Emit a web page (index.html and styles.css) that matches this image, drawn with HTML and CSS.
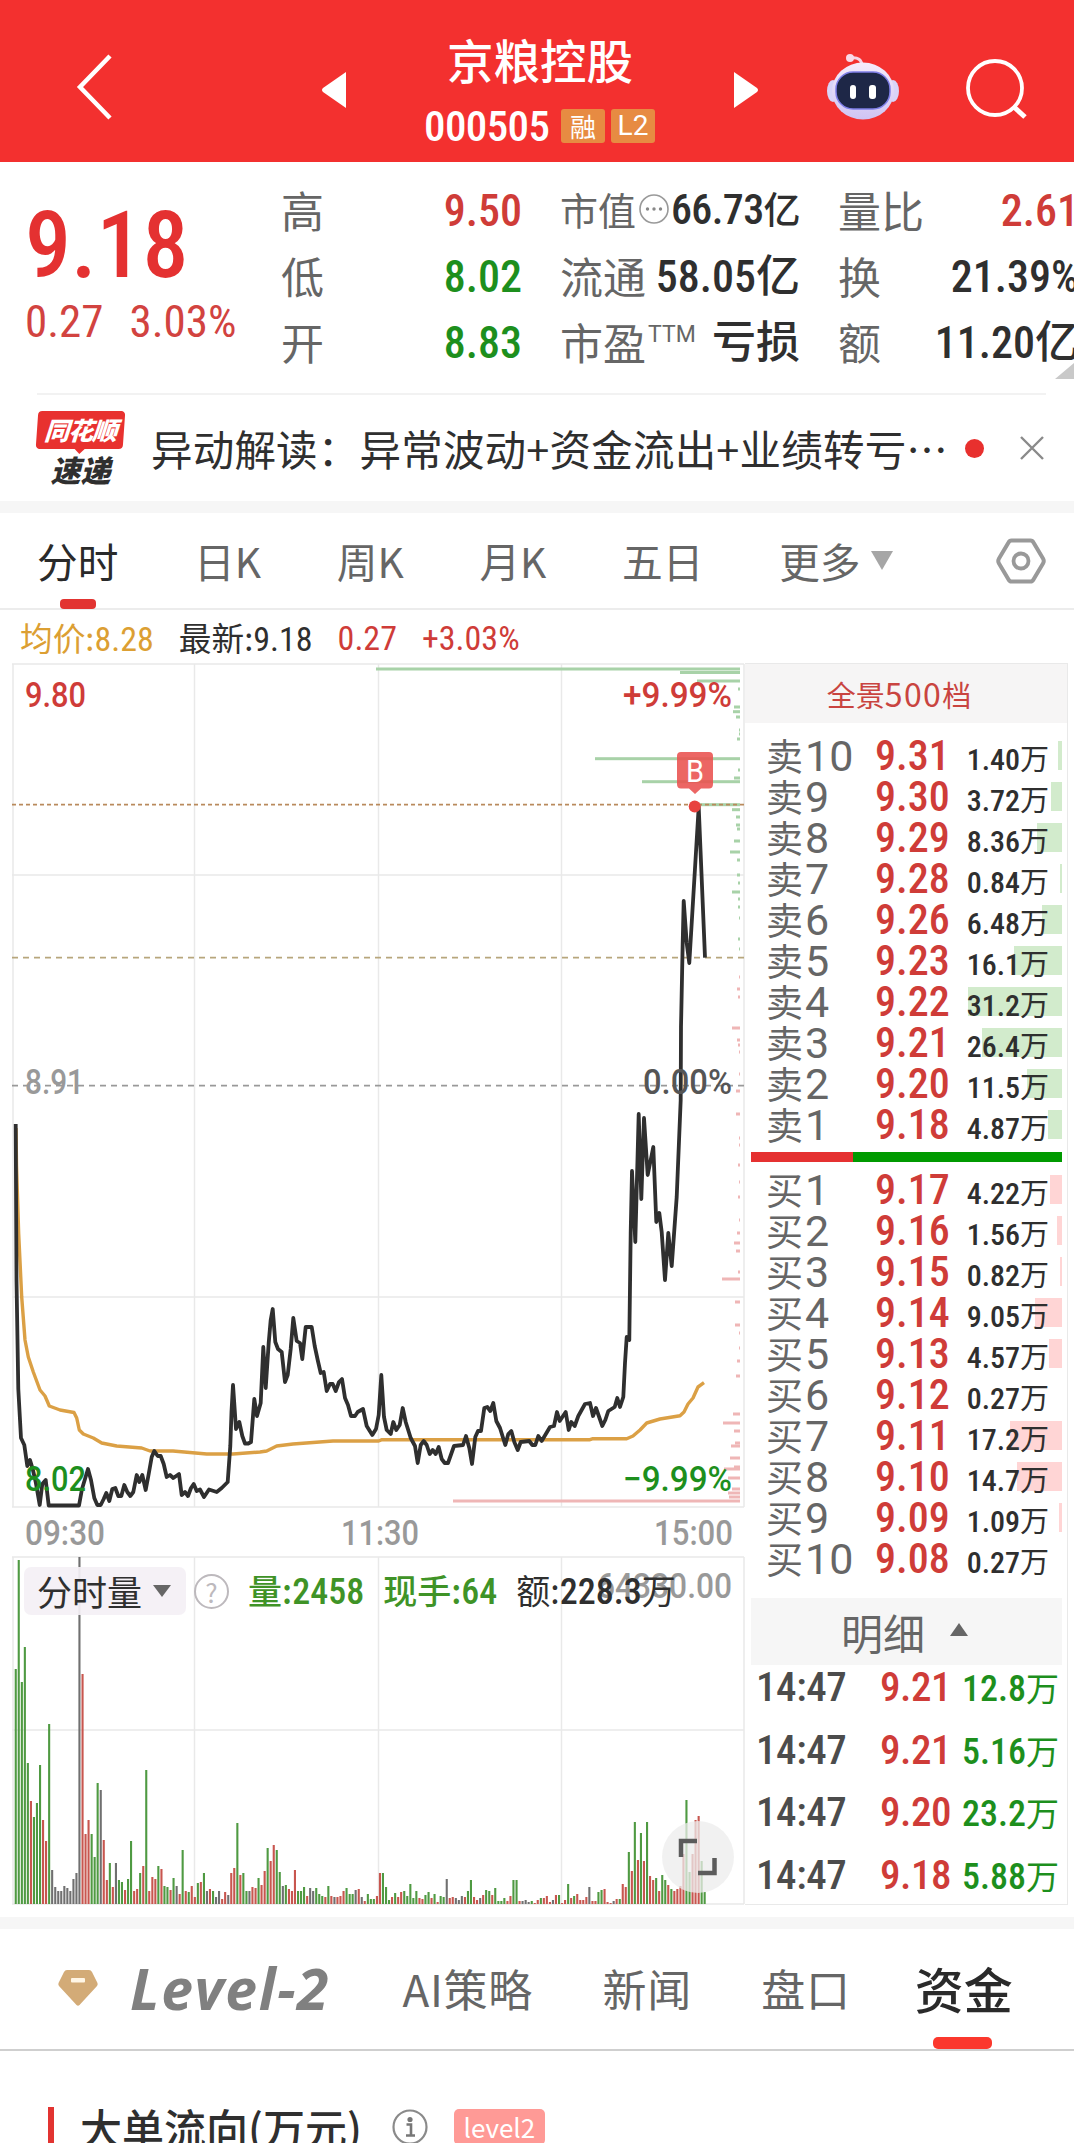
FILE: index.html
```html
<!DOCTYPE html>
<html lang="zh-CN">
<head>
    <meta charset="UTF-8">
    <meta name="viewport" content="width=device-width, initial-scale=1.0">
    <title>京粮控股 000505</title>
    <link rel="stylesheet" href="styles.css">
</head>
<body>

    <header class="topbar">
        <svg class="back" width="36" height="68" viewBox="0 0 36 68"><path d="M34 3 L4 34 L34 65" fill="none" stroke="#fff" stroke-width="4.5"/></svg>
        <svg class="prev" width="24" height="36" viewBox="0 0 24 36"><path d="M24 0 V36 L1 20 Q-1 18 1 16 Z" fill="#fff"/></svg>
        <div class="stock">
            <h1>京粮控股</h1>
            <div class="code-row">
                <span class="code num">000505</span>
                <span class="tag">融</span>
                <span class="tag num">L2</span>
            </div>
        </div>
        <svg class="next" width="24" height="36" viewBox="0 0 24 36"><path d="M0 0 V36 L23 20 Q25 18 23 16 Z" fill="#fff"/></svg>
        <svg class="robot" width="74" height="70" viewBox="0 0 74 70">
            <defs>
                <linearGradient id="shell" x1="0" y1="0" x2="0" y2="1">
                    <stop offset="0" stop-color="#f6ecfb"/>
                    <stop offset="1" stop-color="#cfc4f3"/>
                </linearGradient>
            </defs>
            <path d="M25 6 Q37 4 37 15" fill="none" stroke="#f6d3e4" stroke-width="3"/>
            <circle cx="25" cy="6" r="4" fill="#f9d9e8"/>
            <ellipse cx="8" cy="39" rx="6" ry="11" fill="#d9d4f8"/>
            <ellipse cx="68" cy="39" rx="6" ry="11" fill="#d9d4f8"/>
            <ellipse cx="38" cy="39" rx="31" ry="28.5" fill="url(#shell)"/>
            <rect x="11" y="20" width="54" height="37" rx="17" fill="#1e2747" stroke="#7f7fe8" stroke-width="1.5"/>
            <rect x="25" y="33" width="6" height="14" rx="3" fill="#fff"/>
            <rect x="44" y="33" width="7" height="14" rx="3" fill="#fff"/>
        </svg>
        <svg class="search" width="64" height="64" viewBox="0 0 64 64">
            <circle cx="31" cy="30" r="27" fill="none" stroke="#fff" stroke-width="3.8"/>
            <path d="M50 49 L61 59" stroke="#fff" stroke-width="5"/>
        </svg>
    </header>

    <section class="quote">
        <div class="price">
            <div class="last num">9.18</div>
            <div class="change"><span class="num">0.27</span><span class="num">3.03%</span></div>
        </div>
        <div class="stats">
            <div class="stat"><span class="label">高</span><span class="num red">9.50</span></div>
            <div class="stat"><span class="label">低</span><span class="num green">8.02</span></div>
            <div class="stat"><span class="label">开</span><span class="num green">8.83</span></div>
        </div>
        <div class="stats cap">
            <div class="stat">
                <span class="label small">市值<svg width="34" height="32" viewBox="0 0 34 32"><circle cx="18" cy="16" r="14" fill="none" stroke="#999" stroke-width="1.6"/><circle cx="11.5" cy="16" r="1.7" fill="#888"/><circle cx="18" cy="16" r="1.7" fill="#888"/><circle cx="24.5" cy="16" r="1.7" fill="#888"/></svg></span>
                <span class="num tight">66.73<span>亿</span></span>
            </div>
            <div class="stat"><span class="label">流通</span><span class="num">58.05亿</span></div>
            <div class="stat"><span class="label">市盈<sup>TTM</sup></span><span class="num">亏损</span></div>
        </div>
        <div class="stats last-col">
            <div class="stat"><span class="label">量比</span><span class="num red">2.61</span></div>
            <div class="stat"><span class="label">换</span><span class="num">21.39%</span></div>
            <div class="stat"><span class="label">额</span><span class="num">11.20亿</span></div>
        </div>
        <i class="corner"></i>
    </section>

    <section class="news">
        <div class="news-logo">
            <b class="logo-top">同花顺</b>
            <b class="logo-bottom">速递</b>
        </div>
        <p>异动解读：异常波动+资金流出+业绩转亏⋯</p>
        <i class="dot"></i>
        <svg width="26" height="26" viewBox="0 0 26 26"><path d="M2 2 L24 24 M24 2 L2 24" stroke="#8a8a8a" stroke-width="2.4"/></svg>
    </section>

    <nav class="periods">
        <span class="active">分时</span>
        <span>日K</span>
        <span>周K</span>
        <span>月K</span>
        <span>五日</span>
        <span class="more">更多<i class="down"></i></span>
        <svg width="50" height="46" viewBox="0 0 50 46">
            <path d="M15.5 2.5 H34.5 Q36.5 2.5 37.5 4.5 L47 20.5 Q48.5 23 47 25.5 L37.5 41.5 Q36.5 43.5 34.5 43.5 H15.5 Q13.5 43.5 12.5 41.5 L3 25.5 Q1.5 23 3 20.5 L12.5 4.5 Q13.5 2.5 15.5 2.5 Z" fill="none" stroke="#999" stroke-width="4"/>
            <circle cx="25" cy="23" r="7.5" fill="none" stroke="#999" stroke-width="3.8"/>
        </svg>
    </nav>

    <div class="summary">
        <span class="avg">均价:<span class="num">8.28</span></span>
        <span>最新:<span class="num">9.18</span></span>
        <span class="num red">0.27</span>
        <span class="num red">+3.03%</span>
    </div>

    <main class="trade">
        <div class="charts">
            <svg class="price-chart" width="745" height="893" viewBox="0 663 745 893">
                <g class="grid">
                    <path d="M12 664 H744 M12 875 H744 M12 1297 H744 M12 1507 H744"/>
                    <path d="M13 664 V1507 M194.5 664 V1507 M378.5 664 V1507 M561.5 664 V1507 M744 664 V1507"/>
                </g>
                <g id="depth"></g>
                <path d="M12 804.7 H745" stroke="#b98a5c" stroke-width="1.8" stroke-dasharray="4 3"/>
                <path d="M12 957.7 H745" stroke="#b7a67c" stroke-width="1.8" stroke-dasharray="6 5"/>
                <path d="M12 1085.7 H745" stroke="#999" stroke-width="1.8" stroke-dasharray="6 5"/>
                <path class="avg-line" d="M16 1128 L16.5 1165 L18.7 1234 L21.7 1297 L25 1340 L28.3 1357 L33.3 1372 L40 1390 L45 1396 L49.3 1406 L60 1410 L74 1412.5 L76.7 1418 L79.3 1430 L83.3 1434 L93.3 1438 L101.7 1443 L116.7 1446 L141.7 1448 L150 1451 L173 1451 L206.7 1454 L233 1454 L260 1452 L266.7 1451 L276.7 1446 L293 1444 L333 1441 L378.7 1441 L382 1439.7 L590 1439.7 L593 1438.7 L626.7 1438.7 L633 1436 L640 1430 L646.7 1423 L660 1419 L680 1415.7 L684 1412 L688 1404 L693 1398 L698 1387 L704 1382.7"/>
                <path class="price-line" d="M15.7 1124 L16.5 1280 L18.3 1389 L21 1438 L24.3 1445 L27.3 1466 L30 1460 L32.7 1469 L35.7 1482 L39.7 1505 L42.3 1484 L45.7 1480 L48.7 1505.5 H79 L82 1489 L85.3 1478 L88 1469 L91 1480 L94.3 1498 L97.3 1505 H100.7 L103.7 1499 L106.3 1493 L109.3 1501 L112.3 1489 L115.3 1488 L118.3 1496 H121.3 L124.3 1485 L127.3 1492 L130.3 1496 L133.3 1492 L136.7 1475 L139.3 1482 L142.3 1475 L145.7 1490 L148.7 1474 L151.7 1457 L154.3 1451 L157.7 1456 H160.7 L163.7 1464 L166.7 1477 L170 1475 L173.3 1478 L179 1474 L181.7 1495 L185 1492 L188 1496 L191 1488 L193.7 1484 L196.7 1491 L200 1489.5 L204 1497 L209 1489.5 L216.7 1492 L221.7 1488 L227.7 1482 L230.3 1446 L231.5 1412 L233 1385 L236 1429 L239.3 1422 L242.3 1436 L245 1443.5 H248.3 L251 1442 L254.3 1399 L257 1416 L260.7 1403 L263.3 1347 L265.7 1388 L268.7 1343 L270.7 1320 L272.7 1309 L275.3 1342 L278 1349 L281.7 1352 L285 1382 L287.7 1375 L290.7 1349 L293.3 1318 L296.7 1341 L300 1343 L302.3 1359 L305.7 1327 H311.7 L314.7 1346 L317.7 1360 L320.7 1373 L323.7 1372 L326.7 1391 L330 1384 H332.7 L335.7 1391 L339 1382 L342 1379 L345 1398 L348 1405 L351 1416 H355 L357.7 1412 L363 1409 L366.7 1426 L372.3 1435 L376 1429 L378.7 1415 L381.3 1375 L384 1417 L386.7 1430 L390.7 1434 L393.3 1422 L396.3 1430 L399.7 1425 L402.7 1408 L405.7 1422 L410.7 1438 L415 1446 L417.7 1463 L420.7 1445 L423.7 1441 L426.7 1445 L429.7 1454 L432.7 1450 L435.7 1454 L438.7 1447 L441.7 1459 L444.7 1463 H448 L454 1446 L463 1445 L466 1436 L469.3 1448 L472 1464 L475.3 1437 L478 1431 H481 L484.3 1408 L487.3 1407 L490.3 1411 L493.3 1403 L496.3 1421 L500 1428 L505.3 1445 L508.3 1434 L511.3 1431 L514.3 1442 L517.7 1450 L520.7 1442 L529.3 1441 L532.3 1445 H535.3 L538.3 1436 L541.7 1441 L550 1427 L554 1426 L557 1412 L559.7 1421 L565.7 1412 L568.7 1430 L571.3 1422 L574.7 1426 L578.3 1416 L585 1404 L590 1403 L593 1416 L596 1408 L602.3 1426 L605.3 1420 L608.3 1411 L614.7 1407 L617.3 1398 L620 1407 L623.3 1397 L625 1363 L626.7 1337 L629.3 1340 L630.7 1233 L632 1171 L635.3 1242 L638.7 1114 L641.3 1199 L644 1118 L647.7 1175 L653.3 1147 L656.3 1222 L659.3 1213 L661.7 1232 L665 1280 L668.3 1233 L671.7 1266 L676.7 1197 L680.7 1100 L681 1027 L682.7 943 L683.7 901 L686.7 943 L689.3 963 L698.7 807 L705 957.7"/>
                <!-- buy marker -->
                <circle cx="694.7" cy="806.5" r="6" fill="#e8423f"/>
                <path d="M681 752 H709 Q713 752 713 756 V784 Q713 788.5 709 788.5 H701 L695 794 L689 788.5 H681 Q677 788.5 677 784 V756 Q677 752 681 752 Z" fill="#e9514f" fill-opacity=".88"/>
                <text class="marker" x="686" y="782" textLength="18" lengthAdjust="spacingAndGlyphs">B</text>
                <text class="red" x="25" y="706.5" textLength="61" lengthAdjust="spacingAndGlyphs">9.80</text>
                <text class="grey" x="25" y="1094" textLength="59" lengthAdjust="spacingAndGlyphs">8.91</text>
                <text class="green" x="25" y="1490.5" textLength="61" lengthAdjust="spacingAndGlyphs">8.02</text>
                <text class="red" x="623" y="706.5" textLength="109" lengthAdjust="spacingAndGlyphs">+9.99%</text>
                <text class="dark" x="643" y="1094" textLength="89" lengthAdjust="spacingAndGlyphs">0.00%</text>
                <text class="green" x="623" y="1490.5" textLength="109" lengthAdjust="spacingAndGlyphs">−9.99%</text>
                <text class="grey" x="25" y="1545" textLength="80" lengthAdjust="spacingAndGlyphs">09:30</text>
                <text class="grey" x="341" y="1545" textLength="78" lengthAdjust="spacingAndGlyphs">11:30</text>
                <text class="grey" x="654" y="1545" textLength="79" lengthAdjust="spacingAndGlyphs">15:00</text>
            </svg>
            <div class="volume">
                <div class="volume-head">
                    <span class="chip">分时量<i class="down"></i></span>
                    <span class="help">?</span>
                    <span class="green2">量:<span class="num">2458</span></span>
                    <span class="green2">现手:<span class="num">64</span></span>
                    <span>额:<span class="num">228.3</span>万</span>
                </div>
                <svg width="745" height="349" viewBox="0 1556 745 349">
                    <g class="grid">
                        <path d="M12 1557 H744 M12 1730 H744 M12 1904 H744"/>
                        <path d="M13 1557 V1904 M194.5 1557 V1904 M378.5 1557 V1904 M561.5 1557 V1904 M744 1557 V1904"/>
                    </g>
                    <text class="grey" x="597" y="1598" textLength="135" lengthAdjust="spacingAndGlyphs">64330.00</text>
                    <g id="bars"></g>
                    <circle cx="698" cy="1857" r="36" fill="#ececec" fill-opacity=".75"/>
                    <path d="M681 1857 V1841 H697 M714.5 1858 V1873 H698" fill="none" stroke="#5c5c5c" stroke-width="4.5"/>
                </svg>
            </div>
        </div>

        <aside class="book">
            <div class="book-head">全景<span>500</span>档</div>
            <div class="levels" id="asks"></div>
            <div class="ratio"><i></i></div>
            <div class="levels" id="bids"></div>
            <div class="detail-head">明细<i class="up"></i></div>
            <div class="ticks">
                <div><span class="num">14:47</span><span class="num red">9.21</span><span class="green"><span class="num">12.8</span>万</span></div>
                <div><span class="num">14:47</span><span class="num red">9.21</span><span class="green"><span class="num">5.16</span>万</span></div>
                <div><span class="num">14:47</span><span class="num red">9.20</span><span class="green"><span class="num">23.2</span>万</span></div>
                <div><span class="num">14:47</span><span class="num red">9.18</span><span class="green"><span class="num">5.88</span>万</span></div>
            </div>
        </aside>
    </main>

    <nav class="tabs">
        <svg width="40" height="38" viewBox="0 0 40 38">
            <path d="M9 1 H31 Q33 1 34 3 L39.5 14 Q40 16 39 17 L21.5 36 Q20 37.5 18.5 36 L1 17 Q0 16 .5 14 L6 3 Q7 1 9 1 Z" fill="#d3ab77"/>
            <rect x="13" y="9" width="14" height="4.5" rx="1" fill="#fff6e6"/>
        </svg>
        <span class="level">Level-2</span>
        <span>AI策略</span>
        <span>新闻</span>
        <span>盘口</span>
        <span class="active">资金</span>
    </nav>

    <section class="flow">
        <i class="mark"></i>
        <h2>大单流向(万元)</h2>
        <svg width="36" height="36" viewBox="0 0 36 36">
            <circle cx="18" cy="18" r="16.5" fill="none" stroke="#8a8a8a" stroke-width="2.2"/>
            <circle cx="18" cy="10.5" r="2.6" fill="#777"/>
            <path d="M14.5 15.5 H19 V26 M14 26.5 H23" fill="none" stroke="#777" stroke-width="2.6"/>
        </svg>
        <span class="badge">level2</span>
    </section>

    <script src="script.js"></script>
</body>
</html>
```
FILE: styles.css
```css
* {
    box-sizing: border-box;
}
body {
    margin: 0;
    width: 1074px;
    height: 2143px;
    overflow: hidden;
    background-color: #fff;
    color: #2f2f2f;
    font-family: "Noto Sans CJK SC", sans-serif;
}
h1, h2, p {
    margin: 0;
    font-weight: normal;
}
i {
    display: block;
}
svg {
    display: block;
    flex: none;
}
.num {
    font-family: Roboto, "Noto Sans CJK SC", sans-serif;
    font-weight: 480;
    font-stretch: 84%;
}
.red {
    color: #cf3c38;
}
.green {
    color: #1d8f1d;
}
.green2 {
    color: #3f9327;
}

/* top bar */
.topbar {
    display: flex;
    height: 162px;
    background-color: #f3302f;
    color: #fff;
}
.back {
    margin: 53px 0 0 76px;
}
.prev {
    margin: 72px 0 0 210px;
}
.stock {
    width: 388px;
    padding-top: 28px;
    text-align: center;
}
.stock h1 {
    height: 65px;
    line-height: 62px;
    font-size: 46.5px;
    font-weight: 500;
}
.code-row {
    display: flex;
    align-items: center;
    height: 66px;
    padding-left: 78px;
    gap: 6px;
}
.code {
    width: 131px;
    font-size: 43px;
    letter-spacing: -0.6px;
    text-align: left;
}
.tag {
    width: 44px;
    height: 34px;
    border-radius: 3px;
    background-color: #e78b42;
    line-height: 34px;
    font-size: 26px;
}
.tag.num {
    font-size: 28px;
    font-weight: 400;
    font-stretch: 95%;
}
.next {
    margin-top: 72px;
}
.robot {
    margin: 52px 0 0 67px;
}
.search {
    margin: 58px 0 0 65px;
}

/* quote */
.quote {
    position: relative;
    display: flex;
    height: 231px;
    padding-top: 16px;
}
.price {
    flex: none;
    width: 281px;
    padding-left: 25px;
    color: #e43131;
}
.last {
    height: 110px;
    line-height: 136px;
    font-size: 92px;
    font-weight: 500;
    font-stretch: 80%;
}
.change {
    display: flex;
    gap: 26px;
    height: 66px;
    line-height: 67px;
    font-size: 45px;
    color: #d24340;
}
.change .num {
    font-weight: 450;
}
.stats {
    flex: none;
    width: 241px;
    margin-right: 38px;
}
.stats.cap {
    width: 240px;
    margin-right: 38px;
}
.stats.last-col {
    margin-right: 0;
}
.stat {
    display: flex;
    justify-content: space-between;
    align-items: center;
    height: 66px;
    font-size: 44px;
    line-height: 62px;
    white-space: nowrap;
}
.stat .tight {
    font-size: 42px;
    font-stretch: 75%;
    letter-spacing: -0.6px;
}
.stat .tight span {
    font-size: 37px;
}
.label {
    display: flex;
    align-items: center;
    padding-bottom: 4px;
    font-size: 43px;
    color: #666;
}
.label.small {
    font-size: 38px;
}
.label sup {
    align-self: flex-start;
    margin-left: 2px;
    font-family: Roboto, sans-serif;
    font-size: 23px;
    line-height: 50px;
}
.corner {
    position: absolute;
    left: 1055px;
    top: 201px;
    border-left: 19px solid transparent;
    border-bottom: 16px solid #c9c9c9;
}

/* news */
.news {
    display: flex;
    align-items: center;
    height: 108px;
    margin: 0 28px 0 37px;
    border-top: 2px solid #f2f2f2;
}
.news-logo {
    position: relative;
    flex: none;
    width: 87px;
    margin-right: 27px;
    font-style: italic;
    text-align: center;
}
.logo-top {
    display: block;
    height: 38px;
    border-radius: 4px;
    background-color: #e8312f;
    color: #fff;
    line-height: 37px;
    font-size: 25px;
    font-weight: 900;
    letter-spacing: -1px;
    transform: skewX(-4deg);
}
.logo-top::after {
    content: "";
    position: absolute;
    left: 38px;
    top: 37px;
    border: 6px solid transparent;
    border-top-color: #e8312f;
    border-bottom: 0;
}
.logo-bottom {
    display: block;
    height: 36px;
    line-height: 40px;
    font-size: 30px;
    font-weight: 900;
}
.news p {
    flex: none;
    width: 814px;
    font-size: 41.5px;
    letter-spacing: 0.2px;
    line-height: 60px;
    white-space: nowrap;
}
.dot {
    flex: none;
    width: 19px;
    height: 19px;
    margin-right: 35px;
    border-radius: 50%;
    background-color: #e8302e;
}

/* period tabs */
.periods {
    position: relative;
    display: flex;
    align-items: center;
    gap: 75.7px;
    height: 109px;
    padding: 0 28px 0 37px;
    border-top: 12px solid #f6f6f6;
    border-bottom: 2px solid #ececec;
    font-size: 40.7px;
    line-height: 60px;
    color: #666;
}
.periods span {
    white-space: nowrap;
}
.periods .active {
    color: #2a2a2a;
}
.periods .active::after {
    content: "";
    position: absolute;
    left: 60px;
    bottom: -1px;
    width: 36px;
    height: 10px;
    border-radius: 4px;
    background-color: #e23431;
}
.periods svg {
    margin-left: auto;
}
.more {
    display: flex;
    align-items: center;
}
.more .down {
    margin-left: 10px;
    border: 11px solid transparent;
    border-top: 19px solid #a6a6a6;
    border-bottom: 0;
}

/* summary */
.summary {
    display: flex;
    align-items: center;
    gap: 25px;
    height: 53px;
    padding: 2px 0 0 20px;
    font-size: 32.7px;
    line-height: 48px;
}
.summary .num {
    font-size: 34px;
    font-weight: 450;
    font-stretch: 80%;
}
.summary .avg {
    color: #dc9f33;
}

/* charts */
.trade {
    display: flex;
    height: 1242px;
}
.charts {
    width: 745px;
}
.charts text {
    font-family: Roboto, sans-serif;
    font-size: 35px;
    font-weight: 470;
    font-stretch: 90%;
    fill: currentColor;
}
.charts text.grey {
    color: #999;
}
.charts text.dark {
    color: #555;
}
.charts text.marker {
    color: #fff;
    font-size: 32px;
    font-weight: 400;
}
.grid path {
    fill: none;
    stroke: #e9e9e9;
    stroke-width: 1.5;
}
.price-line {
    fill: none;
    stroke: #2f2f2f;
    stroke-width: 3.8;
    stroke-linejoin: round;
}
.avg-line {
    fill: none;
    stroke: #dba045;
    stroke-width: 3.4;
    stroke-linejoin: round;
}
.volume {
    position: relative;
}
.volume-head {
    position: absolute;
    top: 11px;
    left: 24px;
    display: flex;
    align-items: center;
    gap: 19px;
    height: 48px;
    font-size: 34px;
    line-height: 48px;
    white-space: nowrap;
}
.volume-head .green2 {
    font-weight: 500;
}
.volume-head .num {
    font-size: 36px;
    font-weight: 490;
    font-stretch: 86%;
}
.chip {
    display: flex;
    align-items: center;
    width: 162px;
    height: 48px;
    padding-left: 13px;
    border-radius: 7px;
    background-color: rgba(244, 240, 245, 0.92);
    font-size: 35px;
}
.chip .down {
    margin-left: 11px;
    border: 9px solid transparent;
    border-top: 12px solid #666;
    border-bottom: 0;
}
.help {
    width: 35px;
    height: 35px;
    margin-left: -11px;
    border: 2px solid #bdb9bd;
    border-radius: 50%;
    color: #bdb9bd;
    line-height: 31px;
    font-size: 26px;
    text-align: center;
}

/* order book */
.book {
    width: 323px;
    border: 1px solid #e9e9e9;
    border-left: 0;
}
.book-head {
    height: 59px;
    background-color: #f6f5f5;
    color: #c94440;
    line-height: 58px;
    font-size: 29px;
    text-align: center;
    padding-right: 14px;
}
.book-head span {
    font-size: 32px;
    letter-spacing: 1.4px;
}
.levels {
    height: 410px;
}
#asks {
    margin-top: 12px;
}
.row {
    position: relative;
    display: flex;
    height: 41px;
    line-height: 41px;
    padding-left: 21px;
    white-space: nowrap;
}
.row .name {
    width: 109px;
    font-size: 37px;
    color: #666;
}
.row .name .num {
    padding-left: 2px;
    font-size: 43px;
    font-weight: 370;
    font-stretch: 88%;
}
.row .cost {
    width: 82px;
    font-size: 42px;
}
.row .amount {
    width: 92px;
    padding-top: 2px;
    font-size: 29px;
    text-align: right;
}
.row .amount .num {
    font-size: 30px;
}
.fill {
    position: absolute;
    right: 5px;
    top: 6px;
    height: 29px;
    background-color: #d2ebcc;
    z-index: -1;
}
#bids .fill {
    background-color: #ffd5d5;
}
.ratio {
    height: 10px;
    margin: 7px 5px 7px 6px;
    background-color: #009a00;
}
.ratio i {
    width: 102px;
    height: 10px;
    background-color: #e53131;
}
.detail-head {
    display: flex;
    align-items: center;
    height: 67px;
    margin: 19px 5px 0 6px;
    padding-left: 90px;
    background-color: #f6f6f6;
    font-size: 42px;
    line-height: 60px;
    color: #666;
}
.up {
    margin-left: 25px;
    margin-bottom: 4px;
    border: 9px solid transparent;
    border-bottom: 13px solid #666;
    border-top: 0;
}
.ticks div {
    display: flex;
    height: 62.7px;
    line-height: 45px;
    padding-left: 11px;
    font-size: 42px;
    color: #4c4c4c;
}
.ticks div > :nth-child(1) {
    width: 124px;
    font-size: 41px;
    letter-spacing: -0.4px;
}
.ticks div > :nth-child(2) {
    width: 74px;
    font-size: 41px;
    letter-spacing: -0.5px;
}
.ticks div > :nth-child(3) {
    width: 105px;
    text-align: right;
    font-size: 33px;
}
.ticks .green .num {
    font-size: 36px;
}

/* bottom tabs */
.tabs {
    position: relative;
    display: flex;
    align-items: center;
    height: 134px;
    margin-top: 12px;
    padding: 0 0 2px 58px;
    border-top: 12px solid #f6f6f6;
    border-bottom: 2px solid #cfcfcf;
    font-size: 44px;
    line-height: 64px;
    color: #666;
}
.tabs span {
    margin-left: 69.5px;
    letter-spacing: 0.7px;
    white-space: nowrap;
}
.tabs .level {
    width: 203px;
    margin-left: 32px;
    font-family: "Open Sans", sans-serif;
    font-size: 57px;
    font-style: italic;
    font-weight: 700;
    letter-spacing: 1.6px;
    color: #808080;
}
.tabs .active {
    margin-left: 64px;
    letter-spacing: 0;
    font-size: 49px;
    font-weight: 500;
    color: #2a2a2a;
}
.tabs .active::after {
    content: "";
    position: absolute;
    left: 933px;
    bottom: 0;
    width: 59px;
    height: 12px;
    border-radius: 5px;
    background-color: #fb382d;
}

/* big order flow */
.flow {
    display: flex;
    align-items: center;
    height: 44px;
    margin: 54px 0 0 48px;
}
.mark {
    width: 6px;
    height: 40px;
    background-color: #e23431;
}
.flow h2 {
    margin: 0 30px 0 26px;
    font-size: 42px;
    font-weight: 500;
    line-height: 44px;
    white-space: nowrap;
}
.badge {
    width: 91px;
    height: 36px;
    margin-left: 26px;
    border-radius: 5px;
    background-color: #ff9a96;
    color: #fff;
    line-height: 35px;
    font-size: 26px;
    text-align: center;
}
```
FILE: script.js
```js
const asks = [
    ["10", "9.31", "1.40", 4], ["9", "9.30", "3.72", 11], ["8", "9.29", "8.36", 25],
    ["7", "9.28", "0.84", 2], ["6", "9.26", "6.48", 20], ["5", "9.23", "16.1", 48],
    ["4", "9.22", "31.2", 94], ["3", "9.21", "26.4", 80], ["2", "9.20", "11.5", 35],
    ["1", "9.18", "4.87", 14]
];
const bids = [
    ["1", "9.17", "4.22", 12], ["2", "9.16", "1.56", 5], ["3", "9.15", "0.82", 2],
    ["4", "9.14", "9.05", 27], ["5", "9.13", "4.57", 13], ["6", "9.12", "0.27", 0],
    ["7", "9.11", "17.2", 52], ["8", "9.10", "14.7", 45], ["9", "9.09", "1.09", 3],
    ["10", "9.08", "0.27", 0]
];

function fillLevels(id, side, rows) {
    document.getElementById(id).innerHTML = rows.map(([n, price, amount, width]) => `
        <div class="row">
            <i class="fill" style="width: ${width}px"></i>
            <span class="name">${side}<span class="num">${n}</span></span>
            <span class="cost num red">${price}</span>
            <span class="amount"><span class="num">${amount}</span>万</span>
        </div>`).join('');
}
fillLevels('asks', '卖', asks);
fillLevels('bids', '买', bids);

// one entry per minute: g = down, r = up, k = flat, then bar height
const volumes = 'g235 g344 g222 g257 g141 r103 g87 g101 g139 r84 r63 g180 k34 k17 k13 k13 k18 k16 k13 k25 k31 k347 r230 r70 r84 g70 g47 g121 k114 r64 r24 g41 r17 k41 g24 g22 r14 g25 g63 r13 r15 g31 r38 g134 r13 r27 r25 g38 r35 g18 g17 r14 g26 k18 r10 g54 r13 g12 r18 r7 g21 r22 g31 k13 r15 g13 k7 k13 r5 r12 k9 r31 r36 g81 r29 g31 g13 k13 r17 r16 g26 r19 r33 g56 r43 r59 g54 g32 k18 g19 r15 r13 r34 g13 g13 g17 r8 k16 k13 g16 g10 g8 r7 g18 r8 k7 r7 r8 r13 g16 g10 g10 k14 r15 k7 r3 g10 g5 g5 r8 r31 g31 g17 g4 r7 g11 r7 r12 g13 g8 g20 g6 g13 r6 r5 g9 g12 r6 g10 r2 g8 g7 k25 r6 r7 k6 k4 k8 r7 g13 g24 r7 r4 k6 r9 g14 g13 r9 g16 g3 g3 g6 r3 r8 g24 g24 r3 k3 k4 k2 g3 r1 r4 g6 r6 r8 r2 k4 r9 g9 r1 r4 g20 r6 g8 r10 r4 r4 r7 k17 r3 r3 g12 g14 r15 r2 r1 k3 r5 g5 r20 r17 g52 r33 g82 r44 g71 r43 g82 r28 r24 g26 r13 g29 g24 r19 g15 r13 r15 r18 r50 g104 g32 r50 r84 r88 g43 g12';
const barColors = { g: '#4f9a42', r: '#c8564f', k: '#707070' };
document.getElementById('bars').innerHTML = volumes.split(' ').map((v, i) => {
    const h = Number(v.slice(1));
    return `<rect x="${(14.7 + i * 3.035).toFixed(1)}" y="${1904 - h}" width="2.1" height="${h}" fill="${barColors[v[0]]}"/>`;
}).join('');

// resting orders by price, drawn from the right edge: [y, width]
const sellDepth = [[669, 364], [672.5, 60], [681, 43], [689, 2], [707, 6], [711.7, 7], [717, 4], [730, 1], [734, 1], [739, 3], [758.7, 145], [770, 2], [778, 6], [781.7, 98], [804.7, 49], [809.7, 8], [817, 4], [825, 4], [829, 3], [841, 6], [852, 10], [860, 3], [875, 3], [883, 2], [892, 8], [899, 2], [907, 2], [918, 1], [939, 2], [949, 1]];
const buyDepth = [[977, 1], [989, 3], [997, 2], [1028, 8], [1040, 3], [1045, 2], [1052, 1], [1074, 1], [1091, 4], [1114, 4], [1138, 1], [1145, 1], [1165, 2], [1182, 1], [1197, 2], [1220, 1], [1233, 3], [1243, 6], [1251, 4], [1272, 2], [1279, 18], [1302, 5], [1325, 5], [1333, 1], [1348, 1], [1361, 3], [1376, 4], [1414, 7], [1423, 17], [1431, 6], [1443, 5], [1446, 9], [1458, 10], [1467, 6], [1469, 16], [1478, 12], [1489, 8], [1493, 12], [1497, 11], [1501, 287]];
const line = (color) => ([y, w]) => `<rect x="${740 - w}" y="${y - 1.5}" width="${w}" height="3" fill="${color}"/>`;
document.getElementById('depth').innerHTML = sellDepth.map(line('#a8d2a8')).join('') + buyDepth.map(line('#efb6b6')).join('');
```
